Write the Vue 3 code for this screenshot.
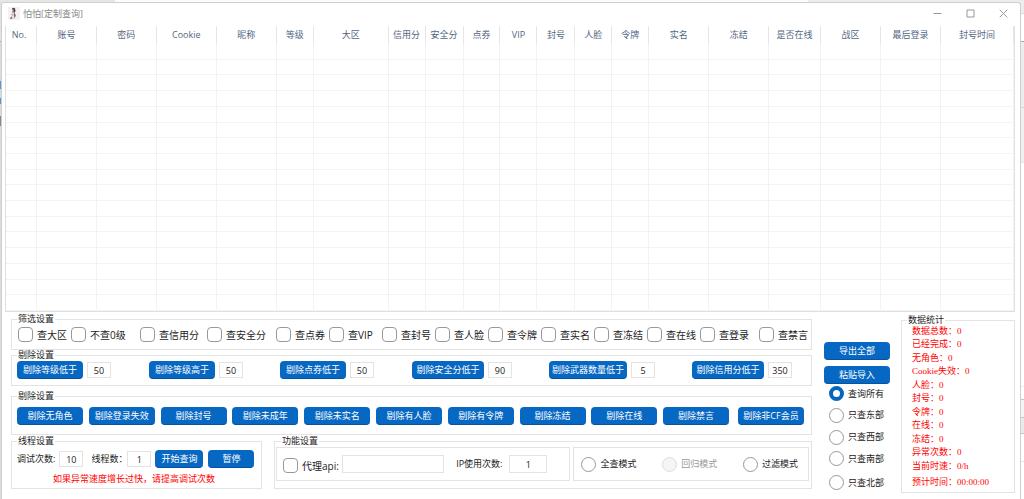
<script setup>
import { ref } from 'vue'

const columns = [
  ['No.', 31], ['账号', 60], ['密码', 60], ['Cookie', 60], ['昵称', 60], ['等级', 37], ['大区', 75],
  ['信用分', 37], ['安全分', 38], ['点券', 37], ['VIP', 37], ['封号', 38], ['人脸', 37], ['令牌', 37],
  ['实名', 60], ['冻结', 60], ['是否在线', 52], ['战区', 60], ['最后登录', 60], ['封号时间', 73]
]
const total = columns.reduce((sum, c) => sum + c[1], 0)

const filters = ['查大区', '不查0级', '查信用分', '查安全分', '查点券', '查VIP', '查封号', '查人脸', '查令牌', '查实名', '查冻结', '查在线', '查登录', '查禁言']

const limits = ref([
  { label: '剔除等级低于', value: '50', size: 'short' },
  { label: '剔除等级高于', value: '50', size: 'short' },
  { label: '剔除点券低于', value: '50', size: 'short' },
  { label: '剔除安全分低于', value: '90', size: 'medium' },
  { label: '剔除武器数量低于', value: '5', size: 'long' },
  { label: '剔除信用分低于', value: '350', size: 'medium' }
])

const removals = ['剔除无角色', '剔除登录失效', '剔除封号', '剔除未成年', '剔除未实名', '剔除有人脸', '剔除有令牌', '剔除冻结', '剔除在线', '剔除禁言', '剔除非CF会员']

const debugTimes = ref('10')
const threads = ref('1')
const api = ref('')
const ipUses = ref('1')
const mode = ref('')
const region = ref('查询所有')
const modes = [['全查模式', false], ['回归模式', true], ['过滤模式', false]]
const regions = ['查询所有', '只查东部', '只查西部', '只查南部', '只查北部']

const stats = ['数据总数：0', '已经完成：0', '无角色：0', 'Cookie失效：0', '人脸：0', '封号：0', '令牌：0', '在线：0', '冻结：0', '异常次数：0', '当前时速：0/h', '预计时间：00:00:00']
</script>

<template>
  <div class="desktop">
    <main class="window">
      <header class="titlebar">
        <svg class="avatar" viewBox="0 0 12 13" aria-hidden="true">
          <rect width="12" height="13" fill="#f5f1f3" />
          <path d="M4 1.5Q5.5 0 7 1.5L7.5 4 6.5 6 5 8 4.2 5Z" fill="#4a4044" />
          <path d="M3.8 2.6Q5 1.6 5.6 3L5.3 5 4.2 4.8Z" fill="#e5b9a9" />
          <path d="M3.6 5.6 6.3 5.2 7.4 8 6.6 12H3.8L3 9Z" fill="#e8d9df" />
          <path d="M6.4 5.4 7.7 8.2 6.8 11.4 6 8ZM2.4 10.5 3.4 9.4 4 12H2.4Z" fill="#5d5560" />
          <path d="M3.6 7 5.4 7.5 5 8.4 3.4 8Z" fill="#d98f91" />
        </svg>
        <h1>怕怕[定制查询]</h1>
        <div class="controls">
          <button aria-label="最小化"><svg viewBox="0 0 9 9"><path d="M0.5 4.5H8.5" /></svg></button>
          <button aria-label="最大化"><svg viewBox="0 0 9 9"><path d="M1 1H8V8H1Z" /></svg></button>
          <button aria-label="关闭"><svg viewBox="0 0 9 9"><path d="M0.7 0.7 8.3 8.3M8.3 0.7 0.7 8.3" /></svg></button>
        </div>
      </header>

      <table class="grid">
        <colgroup>
          <col v-for="c in columns" :key="c[0]" :style="{ width: (c[1] / total) * 100 + '%' }">
        </colgroup>
        <thead>
          <tr><th v-for="c in columns" :key="c[0]" scope="col">{{ c[0] }}</th></tr>
        </thead>
        <tbody>
          <tr v-for="r in 17" :key="r"><td v-for="c in columns" :key="c[0]"></td></tr>
        </tbody>
      </table>

      <div class="bottom">
        <div class="settings">
          <fieldset class="filter-set">
            <legend>筛选设置</legend>
            <div class="filters">
              <label v-for="f in filters" :key="f" class="check"><input type="checkbox"><span>{{ f }}</span></label>
            </div>
          </fieldset>

          <fieldset class="limit-set">
            <legend>剔除设置</legend>
            <div class="limits">
              <div v-for="l in limits" :key="l.label" class="limit">
                <button class="btn" :class="l.size">{{ l.label }}</button>
                <input v-model="l.value" class="num" type="text" :aria-label="l.label">
              </div>
            </div>
          </fieldset>

          <fieldset class="removal-set">
            <legend>剔除设置</legend>
            <div class="removals">
              <button v-for="r in removals" :key="r" class="btn short">{{ r }}</button>
            </div>
          </fieldset>

          <div class="pair">
            <fieldset class="thread-set">
              <legend>线程设置</legend>
              <div class="threads">
                <label for="debug">调试次数:</label>
                <input id="debug" v-model="debugTimes" class="num" type="text">
                <label for="threads" class="second">线程数：</label>
                <input id="threads" v-model="threads" class="num" type="text">
                <button class="btn start">开始查询</button>
                <button class="btn pause">暂停</button>
              </div>
              <p class="warning">如果异常速度增长过快，请提高调试次数</p>
            </fieldset>

            <fieldset class="feature-set">
              <legend>功能设置</legend>
              <div class="features">
                <div class="panel proxy">
                  <label class="check"><input type="checkbox"><span>代理api:</span></label>
                  <input v-model="api" class="num api" type="text" aria-label="代理api">
                  <label for="ip" class="ip-label">IP使用次数:</label>
                  <input id="ip" v-model="ipUses" class="num ip" type="text">
                </div>
                <div class="panel modes">
                  <label v-for="m in modes" :key="m[0]" class="radio" :class="{ off: m[1] }">
                    <input v-model="mode" type="radio" name="mode" :value="m[0]" :disabled="m[1]"><span>{{ m[0] }}</span>
                  </label>
                </div>
              </div>
            </fieldset>
          </div>
        </div>

        <div class="actions">
          <button class="btn">导出全部</button>
          <button class="btn">粘贴导入</button>
          <div class="regions">
            <label v-for="r in regions" :key="r" class="radio">
              <input v-model="region" type="radio" name="region" :value="r"><span>{{ r }}</span>
            </label>
          </div>
        </div>

        <fieldset class="stats">
          <legend>数据统计</legend>
          <ul><li v-for="s in stats" :key="s">{{ s }}</li></ul>
        </fieldset>
      </div>
    </main>
  </div>
</template>

<style>
body {
  background: #fff;
}
</style>

<style scoped>
* {
  box-sizing: border-box;
}
.desktop {
  min-height: 100vh;
  display: flex;
  padding: 2px 3px 0 1px;
  font: 9px/12px "Open Sans", "Noto Sans CJK SC", sans-serif;
  color: #1c1c1c;
  /* other windows showing at the edges: top strip, left edge, right edge */
  background:
    linear-gradient(90deg, #e6e6e6 115px, #fcfcfc 115px 808px, #ececec 808px) top / 100% 2px no-repeat,
    linear-gradient(#e2e2e2 41px, #aaa 41px 42px, #dcdcdc 42px 81px, #5b93cf 81px 89px, #cfdbe8 89px 98px, #5b93cf 98px 104px, #dcdcdc 104px 116px, #85858c 116px 126px, #dcdcdc 126px) left / 2px 100% no-repeat,
    linear-gradient(#eee 13px, #ddd 13px 14px, #fff 14px 41px, #aaa 41px 42px, #ececec 42px 107px, #d5d5d5 107px 108px, #f0f0f0 108px 162px, #e4e4e4 162px 163px, #fff 163px 386px, #eee 386px 387px, #fff 387px 399px, #c4c4c4 399px 400px, #f4f4f4 400px 417px, #c4c4c4 417px 418px, #eaeaea 418px 433px, #c4c4c4 433px 434px, #fff 434px 461px, #e6e6e6 461px 462px, #fff 462px) right / 4px 100% no-repeat;
}
.window {
  flex: 1;
  min-width: 0;
  background: #fff;
  border: 1px solid #cfcfcf;
  border-bottom: 0;
  border-radius: 3px 3px 0 0;
  padding: 0 5px 0 3px;
}
.titlebar {
  height: 23px;
  display: flex;
  align-items: center;
  padding: 0 0 2px 3px;
}
.avatar {
  width: 12px;
  height: 13px;
}
h1 {
  flex: 1;
  margin: 0 0 0 3px;
  font-size: 9px;
  font-weight: 400;
  color: #888;
}
.controls {
  display: flex;
  margin-right: -5px;
}
.controls button {
  width: 33px;
  height: 20px;
  padding: 0;
  border: 0;
  background: none;
  display: grid;
  place-items: center;
}
.controls svg {
  width: 9px;
  height: 9px;
  fill: none;
  stroke: #999;
}
.grid {
  width: 100%;
  height: 286px;
  table-layout: fixed;
  border-collapse: separate;
  border-spacing: 0;
  border: 1px solid #e0e0e0;
  border-top: 0;
}
th {
  height: 18px;
  padding: 0;
  border-right: 1px solid #e6e6e6;
  font-weight: 400;
  color: #53677f;
  white-space: nowrap;
}
th:first-child {
  padding-right: 4px;
}
td {
  padding: 0;
  border-right: 1px solid #f3f3f3;
  border-bottom: 1px solid #f3f3f3;
}
.bottom {
  display: flex;
  padding: 1px 0 6px 6px;
}
fieldset {
  min-width: 0;
  margin: 0;
  padding: 0 2px 0 5px;
  border: 1px solid #e3e3e3;
}
legend {
  margin: 0;
  padding: 0 1px;
  height: 12px;
  white-space: nowrap;
}
.settings {
  flex: 1;
  min-width: 0;
}
.filter-set {
  height: 37px;
}
.limit-set {
  height: 37px;
  margin-top: -1px;
}
.removal-set {
  height: 45px;
  margin-top: 4px;
}
.filters {
  display: grid;
  grid-template-columns: 53fr 69fr 67fr 69fr 53fr 53fr 53fr 53fr 53fr 53fr 53fr 53fr 59fr 50fr;
  padding: 2px 0 0 1px;
}
.check,
.radio {
  display: flex;
  align-items: center;
  gap: 4px;
  white-space: nowrap;
}
.check {
  font-size: 10px;
}
.check input,
.radio input {
  appearance: none;
  flex: none;
  width: 15px;
  height: 15px;
  margin: 0;
  border: 1px solid #999;
  border-radius: 4px;
  background: #fff;
}
.radio input {
  border-radius: 50%;
}
.radio input:checked {
  border: 4px solid #0666bf;
}
.radio.off {
  color: #999;
}
.radio.off input {
  border-color: #ddd;
  background: #f4f5f7;
}
.btn {
  height: 18px;
  padding: 0;
  border: 0;
  border-bottom: 1px solid #07539c;
  border-radius: 4px;
  background: #0768c3;
  color: #fff;
  font: inherit;
  white-space: nowrap;
}
.short {
  width: 66px;
}
.medium {
  width: 72px;
}
.long {
  width: 78px;
}
.num {
  width: 24px;
  height: 16px;
  padding: 0;
  border: 1px solid #e3e3e3;
  background: #fff;
  color: #222;
  font: inherit;
  text-align: center;
}
.limits {
  display: grid;
  grid-template-columns: 132fr 131fr 132fr 137fr 143fr 117fr;
}
.limit {
  display: flex;
  align-items: center;
  gap: 4px;
}
.removals {
  display: grid;
  grid-template-columns: repeat(9, 718fr) 749fr 660fr;
  padding: 5px 5px 0 0;
}
.pair {
  display: grid;
  grid-template-columns: minmax(0, 251fr) minmax(0, 538fr);
  gap: 12px;
}
.thread-set,
.feature-set {
  height: 54px;
}
.feature-set {
  padding: 0 2px 0 1px;
}
.feature-set legend {
  margin-left: 5px;
}
.threads {
  display: flex;
  align-items: center;
  padding-top: 3px;
  white-space: nowrap;
}
.threads .num {
  margin-left: 4px;
}
.threads .second {
  margin-left: 8px;
}
.threads .second + .num {
  margin-left: 0;
}
.start {
  width: 48px;
  margin-left: 4px;
}
.pause {
  width: 46px;
  margin-left: 5px;
}
.warning {
  margin: 5px 0 0;
  padding-right: 8px;
  text-align: center;
  color: #f00;
}
.features {
  display: grid;
  grid-template-columns: minmax(0, 295fr) minmax(0, 236fr);
  gap: 3px;
}
.panel {
  display: flex;
  align-items: center;
  height: 34px;
  border: 1px solid #e3e3e3;
}
.proxy {
  padding: 0 22px 0 6px;
}
.proxy .check {
  padding-top: 3px;
}
.num.api {
  flex: 1;
  min-width: 0;
  height: 18px;
  margin: 0 12px 0 3px;
}
.num.ip {
  width: 38px;
  height: 18px;
  margin-left: 7px;
}
.modes {
  justify-content: space-between;
  padding: 0 10px 0 7px;
}
.actions {
  width: 66px;
  margin: 29px 11px 0 12px;
  display: flex;
  flex-direction: column;
  gap: 6px;
}
.regions {
  height: 104px;
  display: flex;
  flex-direction: column;
  justify-content: space-between;
  margin-top: -4px;
  padding-left: 5px;
}
.regions .radio:last-child {
  margin-top: 2px;
}
.stats {
  width: 114px;
  height: 179px;
  margin-top: 1px;
  padding: 0 0 0 10px;
  font-family: "Liberation Serif", "Noto Sans CJK SC", serif;
}
.stats legend {
  margin-left: -5px;
}
.stats ul {
  height: 164px;
  display: flex;
  flex-direction: column;
  justify-content: space-between;
  margin: -1px 0 0;
  padding: 0;
  list-style: none;
  color: #f00;
  line-height: 13px;
}
.stats li:last-child {
  margin-top: 3px;
}
</style>
